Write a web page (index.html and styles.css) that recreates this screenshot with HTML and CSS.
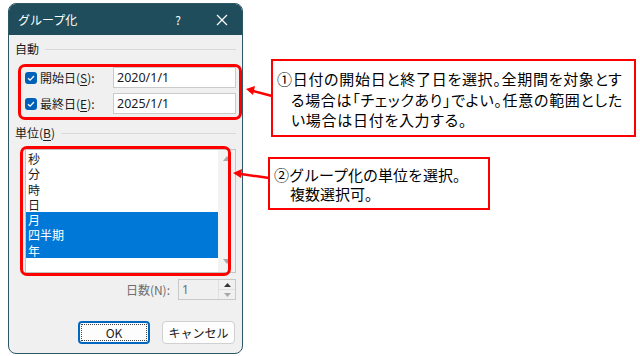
FILE: index.html
```html
<!DOCTYPE html>
<html lang="ja">
<head>
    <meta charset="UTF-8">
    <title>グループ化</title>
    <link rel="stylesheet" href="styles.css">
</head>
<body>
<div class="page">

    <!-- dialog -->
    <div class="dialog">
        <div class="titlebar">
            <span class="title">グループ化</span>
            <span class="help">?</span>
            <span class="close">
                <svg width="12" height="12" viewBox="0 0 12 12"><path d="M1 1 L11 11 M11 1 L1 11" stroke="#ffffff" stroke-width="1.2" fill="none"/></svg>
            </span>
        </div>
        <div class="dialog-body">
            <div class="group-head"><span>自動</span><span class="rule"></span></div>
            <div class="auto-box">
                <div class="date-row">
                    <span class="check"><svg width="12" height="12" viewBox="0 0 12 12"><path d="M3 6.2 L5.1 8.2 L9 4" stroke="#ffffff" stroke-width="1.3" fill="none"/></svg></span>
                    <span class="date-label">開始日(<u>S</u>):</span>
                    <span class="field">2020/1/1</span>
                </div>
                <div class="date-row">
                    <span class="check"><svg width="12" height="12" viewBox="0 0 12 12"><path d="M3 6.2 L5.1 8.2 L9 4" stroke="#ffffff" stroke-width="1.3" fill="none"/></svg></span>
                    <span class="date-label">最終日(<u>E</u>):</span>
                    <span class="field">2025/1/1</span>
                </div>
            </div>
            <div class="group-head unit-head"><span>単位(<u>B</u>)</span><span class="rule"></span></div>
            <div class="listbox">
                <ul class="items">
                    <li>秒</li>
                    <li>分</li>
                    <li>時</li>
                    <li>日</li>
                    <li class="selected">月</li>
                    <li class="selected">四半期</li>
                    <li class="selected">年</li>
                </ul>
                <div class="scrollbar">
                    <svg width="8" height="5" viewBox="0 0 8 5"><path d="M0 5 L4 0 L8 5 Z" fill="#a8a8a8"/></svg>
                    <svg width="8" height="5" viewBox="0 0 8 5"><path d="M0 0 L4 5 L8 0 Z" fill="#a8a8a8"/></svg>
                </div>
            </div>
            <div class="days-row">
                <span class="days-label">日数(N):</span>
                <div class="spin">
                    <span class="spin-value">1</span>
                    <div class="spin-buttons">
                        <span><svg width="7" height="4" viewBox="0 0 7 4"><path d="M0 4 L3.5 0 L7 4 Z" fill="#333333"/></svg></span>
                        <span><svg width="7" height="4" viewBox="0 0 7 4"><path d="M0 0 L3.5 4 L7 0 Z" fill="#a8a8a8"/></svg></span>
                    </div>
                </div>
            </div>
            <div class="buttons">
                <button class="btn btn-ok">OK</button>
                <button class="btn">キャンセル</button>
            </div>
        </div>
    </div>

    <!-- notes -->
    <div class="notes">
        <div class="note note-1">①日付の開始日と終了日を選択。全期間を対象とす<br>る場合は「チェックあり」でよい。任意の範囲とした<br>い場合は日付を入力する。</div>
        <div class="note note-2">②グループ化の単位を選択。<br>複数選択可。</div>
    </div>

    <svg class="arrows" width="640" height="356" viewBox="0 0 640 356">
        <path d="M272 96 L253 91" stroke="#ff0000" stroke-width="2.5" fill="none"/>
        <path d="M246 89 L255 86 L253 95 Z" fill="#ff0000"/>
        <path d="M269 178 L241 174" stroke="#ff0000" stroke-width="2.5" fill="none"/>
        <path d="M233 173 L242 169 L241 178 Z" fill="#ff0000"/>
    </svg>
</div>
</body>
</html>
```

FILE: styles.css
```css
body {
    margin: 0;
    background-color: #ffffff;
    font-family: "Noto Sans CJK JP", "Noto Sans", sans-serif;
    color: #1a1a1a;
}

.page {
    position: relative;
    width: 640px;
    height: 356px;
    display: flex;
    align-items: flex-start;
    overflow: hidden;
}

/* dialog */
.dialog {
    box-sizing: border-box;
    margin: 3px 0 0 8px;
    width: 235px;
    height: 351px;
    border: 1px solid #2c5866;
    border-radius: 8px;
    background-color: #f0f0f0;
    overflow: hidden;
    font-size: 12px;
}

.titlebar {
    height: 31px;
    background-color: #1f4d5b;
    color: #ffffff;
    display: flex;
    align-items: center;
    padding-left: 9px;
}

.title {
    flex: 1;
    font-size: 12px;
}

.help {
    width: 14px;
    text-align: center;
    margin-right: 31px;
    font-size: 12px;
}

.close {
    display: flex;
    margin-right: 14px;
}

.dialog-body {
    padding: 0 6px;
}

.group-head {
    display: flex;
    align-items: center;
    gap: 6px;
    height: 14px;
    line-height: 14px;
    margin-top: 7px;
}

.group-head .rule {
    flex: 1;
    height: 1px;
    background-color: #d9d9d9;
}

.group-head u,
.date-label u {
    text-decoration-thickness: 1px;
    text-underline-offset: 2px;
}

.auto-box {
    box-sizing: border-box;
    margin: 8px 0 0 3px;
    width: 224px;
    border: 3px solid #ff0000;
    border-radius: 7px;
    padding: 0 3px 3px 4px;
    display: flex;
    flex-direction: column;
    gap: 5px;
}

.date-row {
    display: flex;
    align-items: center;
    height: 21px;
}

.check {
    width: 12px;
    height: 12px;
    border-radius: 3px;
    background-color: #0060b8;
    display: flex;
    margin-right: 3px;
}

.date-label {
    width: 73px;
}

.field {
    box-sizing: border-box;
    width: 123px;
    height: 21px;
    background-color: #ffffff;
    border: 1px solid #cacaca;
    padding-left: 3px;
    line-height: 19px;
    font-size: 12.5px;
    font-family: "Noto Sans", "Noto Sans CJK JP", sans-serif;
}

.unit-head {
    margin-top: 6px;
}

/* list */
.listbox {
    position: relative;
    box-sizing: border-box;
    margin: 9px 0 0 10px;
    width: 211px;
    height: 124px;
    border: 1px solid #c4c4c4;
    background-color: #ffffff;
    display: flex;
}

.listbox::after {
    content: "";
    position: absolute;
    top: -4px;
    left: -6px;
    width: 211px;
    height: 130px;
    box-sizing: border-box;
    border: 3px solid #ff0000;
    border-radius: 7px;
}

.items {
    list-style: none;
    margin: 0;
    padding: 1px 0 0 0;
    width: 192px;
}

.items li {
    height: 15.3px;
    line-height: 15.3px;
    padding-left: 2px;
    overflow: hidden;
}

.items li.selected {
    background-color: #0078d7;
    color: #ffffff;
}

.scrollbar {
    flex: 1;
    background-color: #f3f3f3;
    display: flex;
    flex-direction: column;
    justify-content: space-between;
    align-items: center;
    padding: 6px 0 8px;
}

/* days */
.days-row {
    display: flex;
    justify-content: flex-end;
    align-items: center;
    gap: 8px;
    margin-top: 6px;
    height: 21px;
}

.days-label {
    color: #6d6d6d;
}

.spin {
    box-sizing: border-box;
    width: 58px;
    height: 21px;
    border: 1px solid #c8c8c8;
    background-color: #f0f0f0;
    display: flex;
}

.spin-value {
    flex: 1;
    color: #6d6d6d;
    padding-left: 3px;
    line-height: 19px;
    font-family: "Noto Sans", sans-serif;
}

.spin-buttons {
    width: 16px;
    display: flex;
    flex-direction: column;
    border-left: 1px solid #e0e0e0;
}

.spin-buttons span {
    flex: 1;
    display: flex;
    align-items: center;
    justify-content: center;
}

.spin-buttons span + span {
    border-top: 1px solid #e0e0e0;
}

/* buttons */
.buttons {
    display: flex;
    justify-content: flex-end;
    gap: 12px;
    margin: 21px 1px 0 0;
}

.btn {
    position: relative;
    box-sizing: border-box;
    width: 73px;
    height: 23px;
    border: 1px solid #d0d0d0;
    border-radius: 4px;
    background-color: #fdfdfd;
    font-family: "Noto Sans CJK JP", "Noto Sans", sans-serif;
    font-size: 12px;
    color: #1a1a1a;
    padding: 0;
}

.btn-ok {
    width: 72px;
    border: 2px solid #0067c0;
}

.btn-ok::before {
    content: "";
    position: absolute;
    inset: 1px;
    border: 1px dotted #444444;
}

/* notes */
.notes {
    margin: 59px 0 0 28px;
    display: flex;
    flex-direction: column;
    align-items: flex-start;
}

.note {
    box-sizing: border-box;
    border: 2px solid #ff0000;
    background-color: #ffffff;
    white-space: nowrap;
    font-size: 15px;
    color: #000000;
}

.note-1 {
    width: 365px;
    height: 78px;
    padding: 8px 0 0 18px;
    text-indent: -14px;
    line-height: 20.5px;
    font-feature-settings: "palt";
    letter-spacing: 0.7px;
}

.note-2 {
    margin: 20px 0 0 -3px;
    width: 222px;
    height: 53px;
    padding: 6px 0 0 20px;
    text-indent: -16px;
    line-height: 19px;
}

.arrows {
    position: absolute;
    top: 0;
    left: 0;
    pointer-events: none;
}
```
